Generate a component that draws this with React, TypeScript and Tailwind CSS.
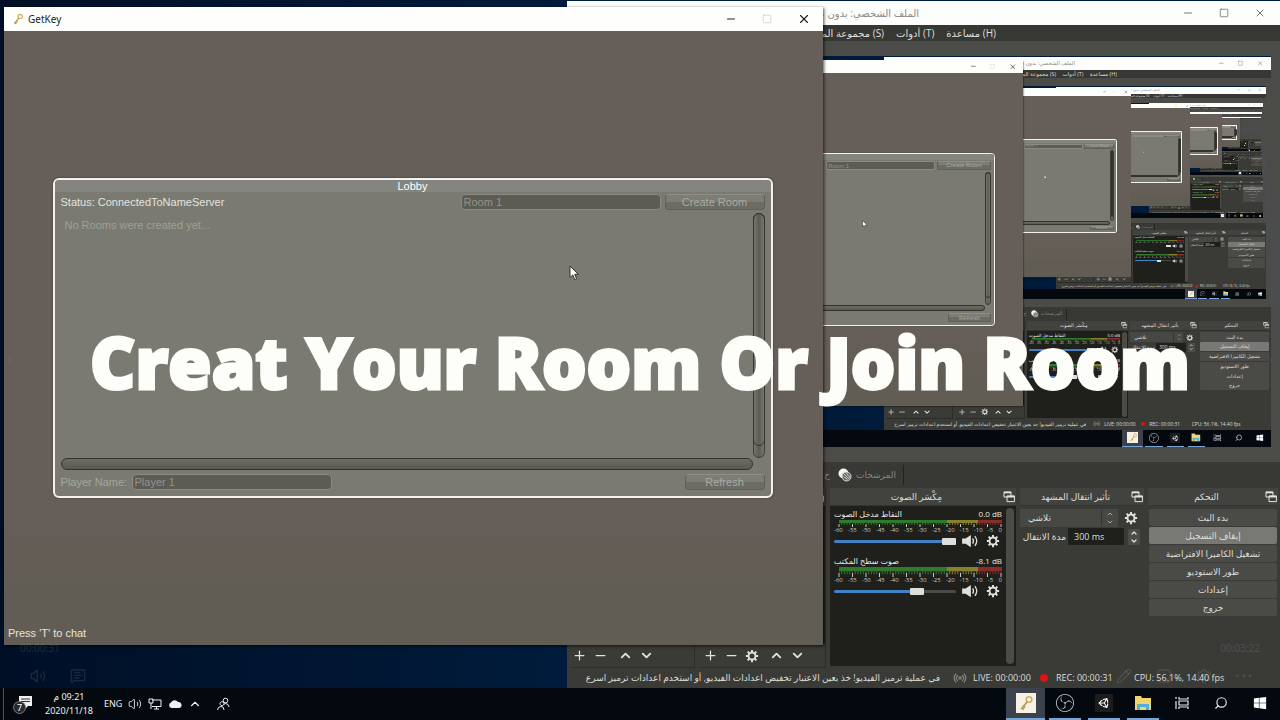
import React, { useId } from 'react';
import { ChevronDown, ChevronLeft, ChevronRight, ChevronUp, MessageSquareText, Minus, Pencil, Plus, Radio, Search, Settings, Square, Volume2, X } from 'lucide-react';
import { FaUnity, FaWindows } from 'react-icons/fa';
import { SiObsstudio } from 'react-icons/si';

const MAX_DEPTH = 5;

const KeyIcon: React.FC<{ className?: string }> = ({ className }) => (
  <svg viewBox="0 0 16 16" className={className} fill="none" aria-hidden="true">
    <circle cx="11" cy="4.5" r="2.8" stroke="#d0b05c" strokeWidth="1.6" />
    <path d="M9.3 6.8 3.2 14M4 13l1.8 1.6M5.6 11.2l1.6 1.4" stroke="#b99748" strokeWidth="1.7" />
  </svg>
);

const PopoutIcon: React.FC = () => (
  <svg viewBox="0 0 12 12" className="h-3 w-3 shrink-0" fill="none" aria-hidden="true">
    <path d="M1 1h7v5H1z" stroke="#e4e4e0" />
    <path d="M1 1.5h7" stroke="#e4e4e0" strokeWidth="1.6" />
    <path d="M4 5h7.4v5.6H4z" fill="#3c3c38" stroke="#e4e4e0" />
    <path d="M4 5.6h7.4" stroke="#e4e4e0" strokeWidth="1.8" />
  </svg>
);

const GearIcon: React.FC<{ className?: string }> = ({ className }) => (
  <svg viewBox="0 0 16 16" className={className} fill="none" stroke="#e0e0dc" aria-hidden="true">
    <circle cx="8" cy="8" r="4" strokeWidth="2.2" />
    <path d="M8 1v2.4M8 12.6V15M1 8h2.4M12.6 8H15M3 3l1.8 1.8M11.2 11.2 13 13M13 3l-1.8 1.8M4.8 11.2 3 13" strokeWidth="2.2" />
  </svg>
);

const SpeakerIcon: React.FC<{ className?: string }> = ({ className }) => (
  <svg viewBox="0 0 20 16" className={className} fill="none" aria-hidden="true">
    <path d="M1 5h4l6-4v14l-6-4H1z" fill="#e0e0dc" />
    <path d="M13 5q2 3 0 6M15.5 2.5q4.4 5.5 0 11" stroke="#e0e0dc" strokeWidth="1.5" />
  </svg>
);

const CursorIcon: React.FC = () => (
  <svg viewBox="0 0 10 16" className="h-4 w-2.5" aria-hidden="true">
    <path d="M1 1v11.5l2.8-2.6 1.9 4.6 1.9-.8-1.9-4.4H9.3z" fill="#fff" stroke="#222" strokeWidth="0.9" />
  </svg>
);

const textBox = 'h-4 rounded-sm border border-[#8b8b83] bg-[#5c5c55] px-0.5 text-[11px] leading-3 text-[#93938c] outline-none';
const unityButton = 'h-4 rounded-sm border border-[#5f5f58] border-t-[#8f8f88] bg-linear-to-b from-[#7d7d76] from-50% to-[#6c6c65] to-50% text-[11px] leading-3 text-[#aaaaa3]';

const GetKeyWindow: React.FC = () => {
  const roomId = useId();
  const playerId = useId();

  return (
    <section className="flex h-full w-full flex-col bg-linear-to-b from-[#665e59] from-80% to-[#625d54] to-92% font-['Liberation_Sans',sans-serif] shadow-[1px_1px_3px_rgba(0,0,0,0.7)]">
      <header className="flex h-6 items-center bg-[#fefefc] pr-3 pl-2">
        <KeyIcon className="mr-1 h-3 w-3" />
        <h1 className="flex-1 font-['Noto_Sans',sans-serif] text-[10px] leading-3 text-[#222]">GetKey</h1>
        <div className="flex gap-6">
          <button aria-label="Minimize"><Minus className="h-3 w-3 text-[#222]" strokeWidth={2} /></button>
          <button aria-label="Maximize" disabled><Square className="h-3 w-3 p-px text-[#d0d0ce]" strokeWidth={2} /></button>
          <button aria-label="Close"><X className="h-3.5 w-3.5 text-[#222]" strokeWidth={2} /></button>
        </div>
      </header>

      <div className="flex flex-1 items-center justify-center pr-0.5">
        <div className="flex h-[320px] w-[720px] flex-col rounded-md border-2 border-[#f4f2ee] bg-[#7a7a72] shadow-[0_0_2px_#333]">
          <h2 className="h-3 rounded-t bg-[#85857f] text-center text-[11px] leading-3 text-white">Lobby</h2>
          <div className="flex flex-1 flex-col px-1.5 pb-1.5">
            <div className="flex h-5 items-center">
              <p className="flex-1 text-[11px] text-[#e4e4de]">Status: ConnectedToNameServer</p>
              <input aria-label="Room name" id={roomId} className={`w-[200px] ${textBox}`} defaultValue="Room 1" />
              <button className={`ml-1 w-[100px] ${unityButton}`}>Create Room</button>
            </div>
            {/* Room list with both scrollbars always shown */}
            <div className="flex flex-1 pt-px">
              <div className="flex flex-1 flex-col">
                <p className="flex-1 px-1 pt-1.5 text-[11px] leading-3 text-[#a0a098]">No Rooms were created yet...</p>
                <div className="h-3 rounded-full border border-[#33332e] bg-linear-to-b from-[#6c6c65] to-[#5a5a53]" />
              </div>
              <div className="mb-3 flex w-3 flex-col rounded-full border border-[#3d3d38] bg-linear-to-r from-[#77776f] via-[#5b5b54] to-[#77776f]">
                <div className="-m-px flex-1 rounded-full border border-[#33332e]" />
                <div className="h-3" />
              </div>
            </div>
            <div className="flex h-5 items-end">
              <label htmlFor={playerId} className="w-[71px] text-[11px] leading-4 text-[#a6a69e]">Player Name:</label>
              <input id={playerId} className={`w-[200px] ${textBox}`} defaultValue="Player 1" />
              <button className={`ml-auto w-20 ${unityButton}`}>Refresh</button>
            </div>
          </div>
        </div>
      </div>

      <p className="-mt-5 h-5 px-1 text-[11px] leading-4 text-[#e6e4de]">Press 'T' to chat</p>
    </section>
  );
};

const METER_LABELS = ['-60', '-55', '-50', '-45', '-40', '-35', '-30', '-25', '-20', '-15', '-10', '-5', '0'];

const MixerChannel: React.FC<{ name: string; level: string; value: number; active?: boolean }> = ({ name, level, value, active }) => (
  <div className="flex flex-col">
    <div className="flex h-3 items-center justify-between text-[8px] text-[#e8e8e4]">
      <span dir="rtl">{name}</span>
      <span>{level}</span>
    </div>
    <svg viewBox="0 0 168 7" preserveAspectRatio="none" className={`w-full ${active ? 'h-2.5' : 'h-[7px]'}`} aria-hidden="true">
      <rect x="5" width="108" height="3" fill="#2f7a2c" />
      <rect x="113" width="31" height="3" fill="#85822f" />
      <rect x="144" width="24" height="3" fill="#8a2c2c" />
      {[...Array(61)].map((_, i) => (
        <path
          key={i}
          d={`M${5 + i * 2.7} ${i % 5 === 0 ? 4 : 3}v${i % 5 === 0 ? 3 : 2}`}
          stroke={i % 5 === 0 ? '#c8c8c2' : i < 40 ? '#2f7a2c' : i < 52 ? '#85822f' : '#8a2c2c'}
          strokeWidth="1"
        />
      ))}
    </svg>
    <div className="flex h-2 justify-between text-[6px] leading-[7px] text-[#c8c8c2]">
      {METER_LABELS.map(label => <span key={label}>{label}</span>)}
    </div>
    <div className="flex h-3 items-center">
      <input
        type="range"
        aria-label={name}
        defaultValue={value}
        className="h-[3px] w-[122px] appearance-none rounded-full [&::-webkit-slider-thumb]:h-[7px] [&::-webkit-slider-thumb]:w-[14px] [&::-webkit-slider-thumb]:appearance-none [&::-webkit-slider-thumb]:rounded-[1px] [&::-webkit-slider-thumb]:bg-[#dededa]"
        style={{ background: `linear-gradient(to right, #3f82c6 ${value}%, #4b4b47 ${value}%)` }}
      />
      <button aria-label="Mute" className="ml-1"><SpeakerIcon className="h-3.5 w-5" /></button>
      <button aria-label="Channel settings" className="ml-1.5"><GearIcon className="h-[14px] w-[14px]" /></button>
    </div>
  </div>
);

const DockTitle: React.FC<{ children: React.ReactNode }> = ({ children }) => (
  <header className="flex h-[18px] items-center border-b border-[#33332f] bg-[#42423e] pr-px text-[9px] text-[#dededa]">
    <h3 className="flex-1 text-center" dir="rtl">{children}</h3>
    <PopoutIcon />
  </header>
);

const DockToolbar: React.FC<{ gear?: boolean }> = ({ gear }) => (
  <div className={`mt-auto flex h-6 items-center gap-1.5 border-b border-[#2c2c28] text-[#e0e0dc] ${gear ? 'pl-1' : 'pl-px'}`}>
    <button aria-label="Add"><Plus className="h-[15px] w-[15px]" strokeWidth={2} /></button>
    <button aria-label="Remove"><Minus className="h-[15px] w-[15px]" strokeWidth={2} /></button>
    {gear && <button aria-label="Properties"><GearIcon className="h-[14px] w-[14px]" /></button>}
    <button aria-label="Move up" className="ml-1"><ChevronUp className="h-[15px] w-[15px]" strokeWidth={3} /></button>
    <button aria-label="Move down"><ChevronDown className="h-[15px] w-[15px]" strokeWidth={3} /></button>
  </div>
);

const CONTROLS = ['بدء البث', 'إيقاف التسجيل', 'تشغيل الكاميرا الافتراضية', 'طور الاستوديو', 'إعدادات', 'خروج'];

const ObsWindow: React.FC<{ depth: number }> = ({ depth }) => {
  const durationId = useId();

  return (
    <section className="flex h-full w-full flex-col bg-[#3a3a36] font-['Open_Sans','DejaVu_Sans',sans-serif] text-[#dededa]">
      <header className="flex h-6 items-center bg-[#fdfdfb] pr-[14px]">
        <h1 dir="rtl" className="w-[352px] overflow-hidden text-[10px] whitespace-nowrap text-[#8c8c8a]">الملف الشخصي: بدون عنوان - المشاهد: بدون عنوان</h1>
        <div className="ml-auto flex gap-6 text-[#777]">
          <button aria-label="Minimize"><Minus className="h-3 w-3" strokeWidth={2} /></button>
          <button aria-label="Maximize"><Square className="h-3 w-3 p-px" strokeWidth={2} /></button>
          <button aria-label="Close"><X className="h-3 w-3" strokeWidth={2} /></button>
        </div>
      </header>
      <nav className="flex h-4 items-center bg-[#373733] text-[10px] whitespace-nowrap">
        <div className="flex w-[429px] shrink-0 justify-end gap-3">
          <button>مجموعة المشاهد (S)</button>
          <button>أدوات (T)</button>
          <button>مساعدة (H)</button>
        </div>
      </nav>

      {/* The capture shows the whole desktop, this window included */}
      <div className="min-h-0 flex-1 bg-linear-to-b from-[#4b4b47] from-30% via-[#4b4d50] via-55% to-[#4b4b47] to-80% px-[9px] py-[15px]">
        {depth < MAX_DEPTH && (
          <div className="h-full w-full [zoom:0.543]" inert>
            <Desktop depth={depth + 1} />
          </div>
        )}
      </div>

      <div className="flex h-[26px] items-center justify-end bg-[#383834] text-[9px] text-[#85857f]">
        <div className="flex h-5 w-[80px] items-center gap-1 border-r border-[#22221f]">
          <span className="w-2.5 overflow-hidden">خ</span>
          <svg viewBox="0 0 14 14" className="h-3.5 w-3.5" aria-hidden="true">
            <circle cx="5.5" cy="5.5" r="5" fill="#f2f2ee" />
            <circle cx="8.5" cy="8.500" r="4.5" fill="#6a6a66" stroke="#dededa" />
            <path d="m6 6 5 5M8.500 5l3.500 5M5.500 8.500l4 3" stroke="#dededa" strokeWidth="0.8" />
          </svg>
          <span dir="rtl">المرشحات</span>
        </div>
        <div className="w-[376px]" />
      </div>

      <div className="flex h-[180px] gap-1 pr-0.5 pl-1">
        <div className="flex w-[124px] flex-col border-r border-[#2c2c28]">
          <DockTitle>المشاهد</DockTitle>
          <div className="flex-1 bg-[#1f1f1b]" />
          <DockToolbar />
        </div>
        <div className="flex w-[127px] flex-col border-r border-[#2c2c28]">
          <DockTitle>المصادر</DockTitle>
          <div className="flex-1 bg-[#1f1f1b]" />
          <DockToolbar gear />
        </div>

        <div className="flex w-[186px] flex-col">
          <DockTitle>مِكْسَر الصوت</DockTitle>
          <div className="mb-0.5 flex flex-1 justify-between bg-[#1f1f1b] py-0.5 pr-0.5 pl-1">
            <div className="flex w-[168px] flex-col gap-2">
              <MixerChannel name="التقاط مدخل الصوت" level="0.0 dB" value={100} />
              <MixerChannel name="صوت سطح المكتب" level="-8.1 dB" value={70} active />
            </div>
            <div className="w-2 rounded-full bg-[#4b4b47]" />
          </div>
        </div>

        <div className="flex flex-1 flex-col">
          <DockTitle>تأثير انتقال المشهد</DockTitle>
          <div className="mt-[3px] flex h-[18px] items-center">
            <div className="flex flex-1 items-center bg-[#474743]">
              <select aria-label="تأثير الانتقال" className="h-[18px] flex-1 appearance-none px-2 text-[9px]">
                <option>تلاشي</option>
              </select>
              <span className="flex flex-col border-l border-[#33332f] px-1">
                <ChevronUp className="h-2 w-2" />
                <ChevronDown className="h-2 w-2" />
              </span>
            </div>
            <button aria-label="Transition settings" className="mx-1.5"><GearIcon className="h-3.5 w-3.5" /></button>
          </div>
          <div className="mt-px flex h-[17px] items-center">
            <label htmlFor={durationId} dir="rtl" className="w-[46px] text-[9px] whitespace-nowrap">مدة الانتقال</label>
            <input id={durationId} className="ml-0.5 h-full w-14 bg-[#1f1f1b] px-1.5 text-[9px] outline-none" defaultValue="300 ms" />
            <span className="ml-1 flex flex-col bg-[#4b4b47]">
              <button aria-label="Increase"><ChevronUp className="h-2 w-3" strokeWidth={4} /></button>
              <button aria-label="Decrease"><ChevronDown className="h-2 w-3" strokeWidth={4} /></button>
            </span>
          </div>
        </div>

        <div className="flex w-[130px] flex-col">
          <DockTitle>التحكم</DockTitle>
          <div className="mt-[3px] flex flex-col gap-px px-px">
            {CONTROLS.map((label, i) => (
              <button key={label} dir="rtl" className={`h-[17px] rounded-[2px] text-[9px] leading-4 ${i === 1 ? 'bg-[#787874]' : 'bg-[#4a4a46]'}`}>
                {label}
              </button>
            ))}
          </div>
        </div>
      </div>

      <footer className="flex h-5 items-center pl-1 text-[9px] whitespace-nowrap">
        <p dir="rtl" className="w-[369px] overflow-hidden">في عملية ترميز الفيديو! خذ بعين الاعتبار تخفيض اعدادات الفيديو, أو استخدم اعدادات ترميز اسرع</p>
        <Radio className="mr-1.5 ml-[13px] h-3.5 w-3.5 text-[#8a8a86]" />
        <span className="w-[67px]">LIVE: 00:00:00</span>
        <span className="mr-2 h-2 w-2 rounded-full bg-[#d81414]" />
        <span className="w-[78px]">REC: 00:00:31</span>
        <span>CPU: 56.1%, 14.40 fps</span>
      </footer>
    </section>
  );
};

const APPS = [
  { name: 'GetKey', icon: <span className="bg-[#f6f1e4] p-0.5"><KeyIcon className="h-4 w-4" /></span>, running: true },
  { name: 'OBS Studio', icon: <SiObsstudio className="h-[18px] w-[18px] text-[#c8c8c8]" />, running: true },
  { name: 'Unity', icon: <span className="bg-[#1c1c1e] p-[3px]"><FaUnity className="h-3 w-3 text-white" /></span>, running: true },
  {
    name: 'File Explorer',
    icon: (
      <svg viewBox="0 0 18 16" className="h-4 w-[18px]" aria-hidden="true">
        <path d="M1 1h6l1 2h9v12H1z" fill="#f0d56c" />
        <path d="M3 15V9h12v6h-3v-3H6v3z" fill="#4fb0dc" />
      </svg>
    ),
    running: true,
  },
  {
    name: 'Task View',
    icon: (
      <svg viewBox="0 0 16 14" className="h-3.5 w-4" fill="none" stroke="#e8e8e8" aria-hidden="true">
        <path d="M5 1v2h9V1M5 13v-2h9v2M5 5h9v4H5zM2 1v2M2 5v8" strokeWidth="1.2" />
      </svg>
    ),
    running: false,
  },
  { name: 'Search', icon: <Search className="h-3.5 w-3.5 -scale-x-100 text-[#e8e8e8]" />, running: false },
  { name: 'Start', icon: <FaWindows className="h-3.5 w-3.5 text-white" />, running: false },
];

const Taskbar: React.FC = () => (
  <footer className="flex h-8 shrink-0 items-center bg-[#040910] pl-[3px] font-['Noto_Sans','DejaVu_Sans',sans-serif] text-[9px] text-[#f0f0f0]">
    <div className="h-full w-px bg-[#50545a]" />
    <button aria-label="7 notifications" className="ml-2">
      <svg viewBox="0 0 22 22" className="h-[22px] w-[22px]">
        <path d="M7 3h13v10h-4l-3 3v-3H7z" fill="#f0f0f0" />
        <path d="M9 6h9M9 8.500h9" stroke="#333" />
        <circle cx="7.500" cy="14.500" r="6" fill="#26292e" stroke="#777" />
        <text x="5" y="18" fontSize="9" fill="#fff">7</text>
      </svg>
    </button>
    <div className="mx-2.5 flex w-[50px] flex-col items-center leading-[14px] whitespace-nowrap">
      <span dir="rtl">09:21 م</span>
      <span>2020/11/18</span>
    </div>
    <button className="mr-1.5">ENG</button>
    <div className="flex items-center gap-1.5">
      <Volume2 className="h-3.5 w-3.5" strokeWidth={1.500} />
      <svg viewBox="0 0 14 12" className="h-3 w-3.5" fill="none" stroke="#f0f0f0" aria-hidden="true">
        <path d="M4 2h9v6.500H4M8.500 8.500V11M6 11h5M1 1h4v4H1zM3 5v6" />
      </svg>
      <svg viewBox="0 0 14 10" className="h-2.5 w-3.5" fill="#f0f0f0" aria-hidden="true">
        <path d="M3.500 9A2.800 2.800 0 0 1 3 3.600 4 4 0 0 1 10 3a3 3 0 0 1 1 6z" />
      </svg>
      <ChevronUp className="h-3.5 w-3.5" />
    </div>
    <svg viewBox="0 0 14 14" className="ml-3.5 h-3.5 w-3.5" fill="none" stroke="#f0f0f0" aria-hidden="true">
      <circle cx="9.500" cy="3.500" r="2.300" />
      <path d="M13 10q-.5-3.500-3.500-3.500L8 7.200M8 7a2 2 0 1 0-3.800.5A2 2 0 0 0 8 7M1.500 13Q2 9.500 5 9.500t3 3.500" />
    </svg>

    <div className="mr-px ml-auto flex h-full">
      {APPS.map((app, i) => (
        <button key={app.name} aria-label={app.name} className={`flex h-full w-[39px] flex-col items-center ${i === 0 ? 'bg-[#3b424b]' : ''}`}>
          <span className="flex flex-1 items-center">{app.icon}</span>
          <span className={`h-0.5 ${i === 0 ? 'w-full' : 'w-8'} ${app.running ? 'bg-[#76a5d8]' : ''}`} />
        </button>
      ))}
    </div>
  </footer>
);

const Desktop: React.FC<{ depth: number }> = ({ depth }) => (
  <div className="flex h-full w-full flex-col overflow-hidden">
    <div className="relative min-h-0 flex-1 overflow-hidden bg-linear-to-r from-[#000f26] to-[#001c3c] to-45%">
      <div className="absolute top-px right-0 bottom-0 left-[567px]">
        <ObsWindow depth={depth} />
      </div>
      <div className="absolute top-[7px] left-1 h-[638px] w-[819px]">
        <GetKeyWindow />
      </div>
      <div className={`absolute ${depth === 0 ? 'top-[265px] left-[569px]' : 'top-[302px] left-[527px]'}`}>
        <CursorIcon />
      </div>
    </div>
    <Taskbar />
  </div>
);

/* Player controls that are almost faded out */
const PlayerControls: React.FC = () => (
  <div className="pointer-events-none absolute inset-0 grid grid-rows-[1fr_auto_1fr] font-['Noto_Sans',sans-serif] text-[10px] text-white/10">
    <div />
    <div className="flex justify-between px-1">
      <ChevronLeft className="h-4 w-3" />
      <ChevronRight className="h-4 w-3" />
    </div>
    <div className="flex flex-col gap-3 self-end pb-9">
      <div className="flex justify-between px-5">
        <span>00:00:31</span>
        <span>00:03:22</span>
      </div>
      <div className="flex items-center gap-6 pr-7 pl-[30px]">
        <Volume2 className="h-4 w-4" />
        <MessageSquareText className="h-4 w-4" />
        <Pencil className="ml-auto h-4 w-4" />
        <Square className="h-4 w-4" />
        <Settings className="h-4 w-4" />
        <span>• • •</span>
      </div>
    </div>
  </div>
);

export default function App() {
  return (
    <main className="relative h-screen w-full overflow-hidden">
      <Desktop depth={0} />
      <PlayerControls />
      <div className="pointer-events-none absolute inset-0 flex items-center justify-center pt-1">
        <p className="font-['Open_Sans',sans-serif] text-[70px] leading-none font-extrabold whitespace-nowrap text-[#fdfdfa] [-webkit-text-stroke:3px_#fdfdfa]">Creat Your Room Or Join Room</p>
      </div>
    </main>
  );
}
